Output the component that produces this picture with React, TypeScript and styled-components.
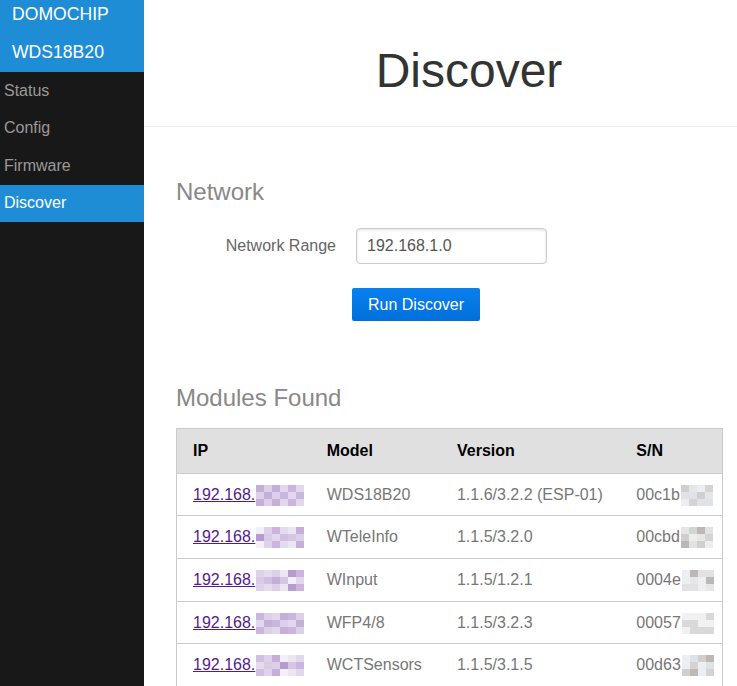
import styled, { createGlobalStyle } from "styled-components";

const GlobalStyle = createGlobalStyle`
  html, body {
    margin: 0;
    padding: 0;
    overflow: hidden;
    background: #fff;
  }
  body {
    font-family: "Liberation Sans", Arial, sans-serif;
    color: #777;
  }
`;

const Layout = styled.div`
  display: flex;
  min-height: 100vh;
`;

const Menu = styled.nav`
  width: 144px;
  flex-shrink: 0;
  background: #191818;
`;

const Brand = styled.div`
  background: #1f8dd6;
  padding-bottom: 1px;
`;

const Heading = styled.div<{ $first?: boolean }>`
  color: #fff;
  font-size: 17.6px;
  line-height: 20px;
  padding: ${p => (p.$first ? "4px" : "9px")} 12px 9px;
  text-transform: uppercase;
`;

const MenuList = styled.ul`
  list-style: none;
  margin: 0;
  padding: 0;
`;

const MenuItem = styled.li<{ $selected?: boolean }>`
  background: ${p => (p.$selected ? "#1f8dd6" : "transparent")};
  a {
    display: block;
    color: ${p => (p.$selected ? "#fff" : "#999")};
    text-decoration: none;
    font-size: 16px;
    line-height: 18.4px;
    padding: 9.6px 0 9.6px 4px;
  }
`;

const Main = styled.main`
  flex: 1;
  min-width: 0;
`;

const Header = styled.header`
  text-align: center;
  padding: 33px 0 17px 57px;
  border-bottom: 1px solid #eee;
  h1 {
    margin: 10px 0;
    font-size: 48px;
    line-height: 56px;
    font-weight: 300;
    color: #333;
  }
`;

const Content = styled.div`
  padding: 0 14px 0 32px;
  line-height: 1.6em;
`;

const Subhead = styled.h2<{ $top: number }>`
  font-size: 24px;
  line-height: 25.6px;
  font-weight: 300;
  color: #888;
  margin: ${p => p.$top}px 0 18px;
`;

const Form = styled.form`
  padding: 5px 0 14px;
`;

const ControlGroup = styled.div`
  display: flex;
  align-items: baseline;
`;

const Label = styled.label`
  width: 160px;
  margin-right: 20px;
  text-align: right;
  font-size: 16px;
  color: #666;
`;

const Input = styled.input`
  width: 191px;
  height: 36px;
  box-sizing: border-box;
  padding: 0 10px;
  font-family: inherit;
  font-size: 16px;
  color: #555;
  border: 1px solid #ccc;
  border-radius: 4px;
  box-shadow: inset 0 1px 3px #ddd;
  outline: none;
`;

const Controls = styled.div`
  margin: 24px 0 0 176px;
  line-height: normal;
`;

const Button = styled.button`
  height: 33px;
  padding: 1px 16px 0;
  border: none;
  border-radius: 2px;
  background: linear-gradient(#0a80ec, #006fdc);
  color: #fff;
  font-family: inherit;
  font-size: 16px;
  cursor: pointer;
`;

const Table = styled.table`
  width: 547px;
  table-layout: fixed;
  border-collapse: collapse;
  border: 1px solid #cbcbcb;
  font-size: 16px;
  th, td {
    padding: 8px 16px;
    text-align: left;
    white-space: nowrap;
    border-bottom: 1px solid #cbcbcb;
    line-height: 25.6px;
  }
  thead {
    background: #e0e0e0;
    color: #000;
  }
  th {
    font-weight: bold;
    padding: 9px 16px;
  }
`;

const IpLink = styled.a`
  color: #551a8b;
  text-decoration: underline;
`;

/* pixelated blur over the hidden part of the address / serial */
const Mosaic = styled.span<{ $cols: number }>`
  display: inline-block;
  overflow: hidden;
  width: ${p => p.$cols * 8}px;
  height: 21px;
  vertical-align: -6px;
  margin-left: 1px;
`;

const MosaicGrid = styled.span<{ $cols: number }>`
  display: grid;
  grid-template-columns: repeat(${p => p.$cols}, 8px);
  grid-auto-rows: 7px;
`;

const Cell = styled.span<{ $c: string }>`
  background: ${p => p.$c};
`;

const purple = ["#ece6f1", "#dcd0e8", "#f3eff6", "#d9cbe6", "#cbb4dd", "#e4dbed", "#d5c6e4", "#c4afd9", "#b49cd0", "#ddd2ea", "#e2d8ed", "#cfc0e1"];
const grey = ["#d9d9d9", "#e6e6e6", "#eeeeee", "#dfe3e8", "#cfcfcf", "#f1f1f1", "#e2e2e2", "#bdb8b5", "#ebeef2", "#d4d4d4"];

function pick(list: string[], seed: number, n: number) {
  const out: string[] = [];
  for (let i = 0; i < n; i++) {
    out.push(list[(seed * 7 + i * 5 + (i % 3) * seed) % list.length]);
  }
  return out;
}

function Blur({ list, seed, cols }: { list: string[]; seed: number; cols: number }) {
  return (
    <Mosaic $cols={cols}>
      <MosaicGrid $cols={cols}>
        {pick(list, seed, cols * 3).map((c, k) => (
          <Cell key={k} $c={c} />
        ))}
      </MosaicGrid>
    </Mosaic>
  );
}

const modules = [
  { model: "WDS18B20", version: "1.1.6/3.2.2 (ESP-01)", sn: "00c1b" },
  { model: "WTeleInfo", version: "1.1.5/3.2.0", sn: "00cbd" },
  { model: "WInput", version: "1.1.5/1.2.1", sn: "0004e" },
  { model: "WFP4/8", version: "1.1.5/3.2.3", sn: "00057" },
  { model: "WCTSensors", version: "1.1.5/3.1.5", sn: "00d63" },
];

const menu = ["Status", "Config", "Firmware", "Discover"];

export default function App() {
  return (
    <>
      <GlobalStyle />
      <Layout>
        <Menu>
          <Brand>
            <Heading $first>Domochip</Heading>
            <Heading>WDS18B20</Heading>
          </Brand>
          <MenuList>
            {menu.map(m => (
              <MenuItem key={m} $selected={m === "Discover"}>
                <a href="#">{m}</a>
              </MenuItem>
            ))}
          </MenuList>
        </Menu>
        <Main>
          <Header>
            <h1>Discover</h1>
          </Header>
          <Content>
            <Subhead $top={52}>Network</Subhead>
            <Form onSubmit={e => e.preventDefault()}>
              <ControlGroup>
                <Label htmlFor="range">Network Range</Label>
                <Input id="range" defaultValue="192.168.1.0" />
              </ControlGroup>
              <Controls>
                <Button type="submit">Run Discover</Button>
              </Controls>
            </Form>
            <Subhead $top={50}>Modules Found</Subhead>
            <Table>
              <colgroup>
                <col style={{ width: 134 }} />
                <col style={{ width: 130 }} />
                <col style={{ width: 179 }} />
                <col style={{ width: 102 }} />
              </colgroup>
              <thead>
                <tr>
                  <th>IP</th>
                  <th>Model</th>
                  <th>Version</th>
                  <th>S/N</th>
                </tr>
              </thead>
              <tbody>
                {modules.map((mod, i) => (
                  <tr key={mod.model}>
                    <td>
                      <IpLink href="#">192.168.</IpLink>
                      <Blur list={purple} seed={i + 1} cols={6} />
                    </td>
                    <td>{mod.model}</td>
                    <td>{mod.version}</td>
                    <td>
                      {mod.sn}
                      <Blur list={grey} seed={i + 2} cols={4} />
                    </td>
                  </tr>
                ))}
              </tbody>
            </Table>
          </Content>
        </Main>
      </Layout>
    </>
  );
}
